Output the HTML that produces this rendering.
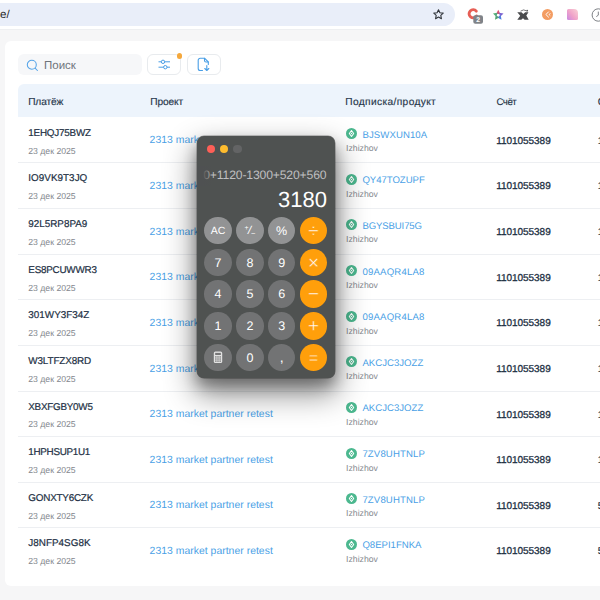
<!DOCTYPE html>
<html lang="ru"><head><meta charset="utf-8"><title>Платежи</title>
<style>
*{box-sizing:border-box;margin:0;padding:0}
html,body{width:600px;height:600px;overflow:hidden}
body{position:relative;background:#f6f6f7;font-family:"Liberation Sans",sans-serif;color:#223044;text-rendering:geometricPrecision}
.abs{position:absolute}
#chrome{left:0;top:0;width:600px;height:30px;background:#fff;border-bottom:1px solid #eeeff1}
#omni{left:-20px;top:3.2px;width:475px;height:22.5px;border-radius:12px;background:#e9eef9}
#url{left:0;top:7.6px;font-size:11.5px;color:#1f1f1f;line-height:14px}
#card{left:4.6px;top:40.6px;width:640px;height:545.6px;background:#fff;border-radius:6px}
#search{left:17.6px;top:54.3px;width:124px;height:21.2px;border-radius:6px;background:#f6f7f9}
#search span{position:absolute;left:26.4px;top:4.5px;font-size:11.5px;line-height:14px;color:#6f747b}
.btn{top:54px;width:34px;height:21px;border-radius:6px;border:1px solid #e8ebee;background:#fff}
#thead{left:17.7px;top:84.2px;width:600px;height:33.1px;background:#edf4fc;border-radius:6px 0 0 0}
.th{top:96.1px;font-size:10.2px;line-height:13px;color:#27364a;-webkit-text-stroke:.15px #27364a;white-space:nowrap}
.line{left:18px;width:600px;height:1px;background:#edeff2}
.id{left:28.3px;font-size:9.9px;line-height:12px;color:#223044;-webkit-text-stroke:.2px #223044;white-space:nowrap;letter-spacing:-.05px}
.dt{left:28.2px;font-size:8.7px;line-height:11px;color:#83878e;white-space:nowrap}
.pj{left:149.6px;font-size:10.4px;letter-spacing:.03px;line-height:13px;color:#4a9fe6;white-space:nowrap}
.sub{left:362.4px;font-size:9.6px;letter-spacing:-.12px;line-height:12px;color:#4a9fe6;white-space:nowrap}
.own{left:346.1px;font-size:8.7px;line-height:11px;color:#83878e;white-space:nowrap}
.acc{left:496.2px;letter-spacing:-.04px;font-size:10px;line-height:12px;color:#223044;-webkit-text-stroke:.3px #223044;white-space:nowrap}
.amt{left:597.8px;font-size:10px;line-height:12px;color:#223044;-webkit-text-stroke:.2px #223044;white-space:nowrap}
.gi{left:345.5px;width:11px;height:11px}
#calc{left:197.1px;top:135.6px;width:137.6px;height:242px;border-radius:7px;background:#4f5251;
 box-shadow:0 0 0 .5px rgba(0,0,0,.4),0 14px 30px 3px rgba(0,0,0,.44),0 8px 14px rgba(0,0,0,.3);overflow:hidden}
.tl{top:9.3px;width:8.1px;height:8.1px;border-radius:50%}
#expr{right:8.3px;top:31.5px;font-size:12.2px;letter-spacing:-.16px;line-height:16px;color:#bfbfc0;white-space:nowrap}
#res{right:7.8px;top:50.5px;font-size:22px;line-height:28px;color:#fff;white-space:nowrap}
.k{width:27.4px;height:27.4px;border-radius:50%;color:#fff;text-align:center;font-size:12.5px;line-height:29px}
.kf{background:#929394}.kd{background:#727374}.ko{background:#ff9f0b}
</style></head><body>
<div id="chrome" class="abs"></div>
<div id="omni" class="abs"></div>
<div id="url" class="abs">e/</div>
<svg class="abs" style="left:432px;top:8px" width="13" height="13" viewBox="0 0 24 24"><path d="M12 3.2l2.6 5.6 6.1.7-4.5 4.2 1.2 6-5.4-3-5.4 3 1.2-6L3.300 9.500l6.100-.7z" fill="none" stroke="#30343a" stroke-width="2" stroke-linejoin="round"/></svg>
<!-- extension icons -->
<svg class="abs" style="left:464px;top:5px" width="22" height="22" viewBox="0 0 22 22"><path d="M12.300 6.100A4.100 4.100 0 1 0 12.600 11" fill="none" stroke="#e65e55" stroke-width="2.900" stroke-linecap="round"/><rect x="9.300" y="10.300" width="9.700" height="8.500" rx="2" fill="#7f8388"/><text x="14.150" y="17.200" font-size="6.800" font-weight="bold" fill="#fff" text-anchor="middle" font-family="Liberation Sans,sans-serif">2</text></svg>
<svg class="abs" style="left:492px;top:8.500px" width="12.500" height="12.500" viewBox="-6 -6 12 12"><g><path d="M0-5.300L2-1.300H-2z" fill="#e2506c"/><path d="M0-5.300L2-1.300H-2z" fill="#7a5fd0" transform="rotate(72)"/><path d="M0-5.300L2-1.300H-2z" fill="#4a7de0" transform="rotate(144)"/><path d="M0-5.300L2-1.300H-2z" fill="#46a866" transform="rotate(216)"/><path d="M0-5.300L2-1.300H-2z" fill="#4fb070" transform="rotate(288)"/><path d="M0-2.500L2.400-.8 1.500 2 -1.500 2 -2.400-.8z" fill="none" stroke="#8a7fd0" stroke-width=".5" opacity=".6"/></g></svg>
<svg class="abs" style="left:517px;top:8.500px" width="12" height="12" viewBox="0 0 12 12"><path d="M.3 3.200H4.500L6.300 5 8.200 3.200H11.500L9.300 6.600 11.700 10.800H7.600L6 9.200 4.300 10.800H.3L3.200 6.800z" fill="#4a4b4d"/><path d="M3.500 2.200Q6.500-.2 9.500 1.800" fill="none" stroke="#5a5b5d" stroke-width=".8"/><circle cx="10.200" cy="1.700" r=".9" fill="#5a5b5d"/></svg>
<svg class="abs" style="left:542px;top:9.200px" width="11" height="11" viewBox="0 0 11 11"><circle cx="5.500" cy="5.500" r="5.500" fill="#f39c62"/><path d="M6.800 2.600L3.900 5.500l2.900 2.900M8.300 4.300L7.100 5.500l1.200 1.200" fill="none" stroke="#fff" stroke-width="1"/></svg>
<div class="abs" style="left:567px;top:9.200px;width:11.300px;height:10.600px;border-radius:1.500px 4px 1.500px 1.500px;background:linear-gradient(50deg,#c987e2,#f0a3c9 45%,#f9d3d6)"></div>
<svg class="abs" style="left:591px;top:7.700px" width="14" height="14" viewBox="0 0 14 14"><circle cx="7.300" cy="7" r="6.200" fill="none" stroke="#7d8085" stroke-width="1"/><path d="M7.300 3.600V7.200L5.300 8.600" fill="none" stroke="#7d8085" stroke-width="1"/></svg>

<div id="card" class="abs"></div>
<div id="search" class="abs"><svg style="position:absolute;left:8.300px;top:4.500px" width="13" height="13" viewBox="0 0 13 13"><circle cx="5.800" cy="5.800" r="4.500" fill="none" stroke="#55a4e8" stroke-width="1.050"/><path d="M9.100 9.100l2.300 2.400" stroke="#55a4e8" stroke-width="1.050" stroke-linecap="round"/></svg><span>Поиск</span></div>
<div class="abs btn" style="left:147px"><svg style="position:absolute;left:9.8px;top:3.7px" width="13" height="11" viewBox="0 0 13 11"><g stroke="#4a9fe6" stroke-width="1" fill="#fff"><path d="M.5 2.800h11.500M.5 8.200h11.500"/><circle cx="5" cy="2.800" r="1.700"/><circle cx="7.300" cy="8.200" r="1.700"/></g></svg></div>
<div class="abs" style="left:177.1px;top:53.2px;width:5.400px;height:5.400px;border-radius:50%;background:#f5a83c"></div>
<div class="abs btn" style="left:186.500px"><svg style="position:absolute;left:9.3px;top:1.8px" width="13" height="15" viewBox="0 0 13 15"><g stroke="#4a9fe6" stroke-width="1.100" fill="none" stroke-linecap="round" stroke-linejoin="round"><path d="M5.500 13.500H3.200a2 2 0 0 1-2-2V3.200a2 2 0 0 1 2-2h4.300l3.800 3.800v2.500"/><path d="M7.500 1.200v2.300a1.500 1.500 0 0 0 1.500 1.500h2.300"/><path d="M9.800 8.500v4.800M7.800 11.500l2 2 2-2"/></g></svg></div>
<div id="thead" class="abs"></div>
<div class="abs th" style="left:28.2px;letter-spacing:-.15px">Платёж</div>
<div class="abs th" style="left:150.2px;letter-spacing:-.1px">Проект</div>
<div class="abs th" style="left:345.3px;letter-spacing:.36px">Подписка/продукт</div>
<div class="abs th" style="left:496.4px;font-size:9.6px;letter-spacing:-.4px">Счёт</div>
<div class="abs th" style="left:597.8px">Сумма</div>

<div class="abs id" style="top:127.8px;letter-spacing:-0.22px">1EHQJ75BWZ</div>
<div class="abs dt" style="top:145.7px">23 дек 2025</div>
<div class="abs pj" style="top:134.4px">2313 market partner retest</div>
<svg class="abs gi" style="top:128.2px" viewBox="0 0 11 11"><circle cx="5.500" cy="5.500" r="5.500" fill="#4cb88f"/><path d="M5.500 2.500L7.700 5.500 5.500 8.500 3.300 5.500z" fill="none" stroke="#fff" stroke-width="1.050" stroke-linejoin="round"/><circle cx="5.500" cy="5.500" r=".65" fill="#fff"/></svg>
<div class="abs sub" style="top:129.7px;letter-spacing:0.09px">BJSWXUN10A</div>
<div class="abs own" style="top:143.2px">Izhizhov</div>
<div class="abs acc" style="top:135.8px">1101055389</div>
<div class="abs amt" style="top:135.8px">1 120</div>
<div class="abs line" style="top:162.4px"></div>
<div class="abs id" style="top:173.4px;letter-spacing:0.03px">IO9VK9T3JQ</div>
<div class="abs dt" style="top:191.3px">23 дек 2025</div>
<div class="abs pj" style="top:180.0px">2313 market partner retest</div>
<svg class="abs gi" style="top:173.8px" viewBox="0 0 11 11"><circle cx="5.500" cy="5.500" r="5.500" fill="#4cb88f"/><path d="M5.500 2.500L7.700 5.500 5.500 8.500 3.300 5.500z" fill="none" stroke="#fff" stroke-width="1.050" stroke-linejoin="round"/><circle cx="5.500" cy="5.500" r=".65" fill="#fff"/></svg>
<div class="abs sub" style="top:175.3px;letter-spacing:-0.04px">QY47TOZUPF</div>
<div class="abs own" style="top:188.8px">Izhizhov</div>
<div class="abs acc" style="top:181.4px">1101055389</div>
<div class="abs amt" style="top:181.4px">1 120</div>
<div class="abs line" style="top:208.0px"></div>
<div class="abs id" style="top:219.0px;letter-spacing:-0.01px">92L5RP8PA9</div>
<div class="abs dt" style="top:236.9px">23 дек 2025</div>
<div class="abs pj" style="top:225.6px">2313 market partner retest</div>
<svg class="abs gi" style="top:219.4px" viewBox="0 0 11 11"><circle cx="5.500" cy="5.500" r="5.500" fill="#4cb88f"/><path d="M5.500 2.500L7.700 5.500 5.500 8.500 3.300 5.500z" fill="none" stroke="#fff" stroke-width="1.050" stroke-linejoin="round"/><circle cx="5.500" cy="5.500" r=".65" fill="#fff"/></svg>
<div class="abs sub" style="top:220.9px;letter-spacing:-0.13px">BGYSBUI75G</div>
<div class="abs own" style="top:234.4px">Izhizhov</div>
<div class="abs acc" style="top:227.0px">1101055389</div>
<div class="abs amt" style="top:227.0px">1 120</div>
<div class="abs line" style="top:253.6px"></div>
<div class="abs id" style="top:264.7px;letter-spacing:-0.24px">ES8PCUWWR3</div>
<div class="abs dt" style="top:282.6px">23 дек 2025</div>
<div class="abs pj" style="top:271.3px">2313 market partner retest</div>
<svg class="abs gi" style="top:265.1px" viewBox="0 0 11 11"><circle cx="5.500" cy="5.500" r="5.500" fill="#4cb88f"/><path d="M5.500 2.500L7.700 5.500 5.500 8.500 3.300 5.500z" fill="none" stroke="#fff" stroke-width="1.050" stroke-linejoin="round"/><circle cx="5.500" cy="5.500" r=".65" fill="#fff"/></svg>
<div class="abs sub" style="top:266.6px;letter-spacing:0.2px">09AAQR4LA8</div>
<div class="abs own" style="top:280.1px">Izhizhov</div>
<div class="abs acc" style="top:272.7px">1101055389</div>
<div class="abs amt" style="top:272.7px">1 120</div>
<div class="abs line" style="top:299.2px"></div>
<div class="abs id" style="top:310.3px;letter-spacing:0.01px">301WY3F34Z</div>
<div class="abs dt" style="top:328.2px">23 дек 2025</div>
<div class="abs pj" style="top:316.9px">2313 market partner retest</div>
<svg class="abs gi" style="top:310.7px" viewBox="0 0 11 11"><circle cx="5.500" cy="5.500" r="5.500" fill="#4cb88f"/><path d="M5.500 2.500L7.700 5.500 5.500 8.500 3.300 5.500z" fill="none" stroke="#fff" stroke-width="1.050" stroke-linejoin="round"/><circle cx="5.500" cy="5.500" r=".65" fill="#fff"/></svg>
<div class="abs sub" style="top:312.2px;letter-spacing:0.2px">09AAQR4LA8</div>
<div class="abs own" style="top:325.7px">Izhizhov</div>
<div class="abs acc" style="top:318.3px">1101055389</div>
<div class="abs amt" style="top:318.3px">1 120</div>
<div class="abs line" style="top:344.9px"></div>
<div class="abs id" style="top:355.9px;letter-spacing:-0.13px">W3LTFZX8RD</div>
<div class="abs dt" style="top:373.8px">23 дек 2025</div>
<div class="abs pj" style="top:362.5px">2313 market partner retest</div>
<svg class="abs gi" style="top:356.3px" viewBox="0 0 11 11"><circle cx="5.500" cy="5.500" r="5.500" fill="#4cb88f"/><path d="M5.500 2.500L7.700 5.500 5.500 8.500 3.300 5.500z" fill="none" stroke="#fff" stroke-width="1.050" stroke-linejoin="round"/><circle cx="5.500" cy="5.500" r=".65" fill="#fff"/></svg>
<div class="abs sub" style="top:357.8px;letter-spacing:0.01px">AKCJC3JOZZ</div>
<div class="abs own" style="top:371.3px">Izhizhov</div>
<div class="abs acc" style="top:363.9px">1101055389</div>
<div class="abs amt" style="top:363.9px">1 120</div>
<div class="abs line" style="top:390.5px"></div>
<div class="abs id" style="top:401.5px;letter-spacing:-0.26px">XBXFGBY0W5</div>
<div class="abs dt" style="top:419.4px">23 дек 2025</div>
<div class="abs pj" style="top:408.1px">2313 market partner retest</div>
<svg class="abs gi" style="top:401.9px" viewBox="0 0 11 11"><circle cx="5.500" cy="5.500" r="5.500" fill="#4cb88f"/><path d="M5.500 2.500L7.700 5.500 5.500 8.500 3.300 5.500z" fill="none" stroke="#fff" stroke-width="1.050" stroke-linejoin="round"/><circle cx="5.500" cy="5.500" r=".65" fill="#fff"/></svg>
<div class="abs sub" style="top:403.4px;letter-spacing:0.02px">AKCJC3JOZZ</div>
<div class="abs own" style="top:416.9px">Izhizhov</div>
<div class="abs acc" style="top:409.5px">1101055389</div>
<div class="abs amt" style="top:409.5px">1 120</div>
<div class="abs line" style="top:436.1px"></div>
<div class="abs id" style="top:447.1px;letter-spacing:-0.31px">1HPHSUP1U1</div>
<div class="abs dt" style="top:465.0px">23 дек 2025</div>
<div class="abs pj" style="top:453.7px">2313 market partner retest</div>
<svg class="abs gi" style="top:447.5px" viewBox="0 0 11 11"><circle cx="5.500" cy="5.500" r="5.500" fill="#4cb88f"/><path d="M5.500 2.500L7.700 5.500 5.500 8.500 3.300 5.500z" fill="none" stroke="#fff" stroke-width="1.050" stroke-linejoin="round"/><circle cx="5.500" cy="5.500" r=".65" fill="#fff"/></svg>
<div class="abs sub" style="top:449.0px;letter-spacing:0.13px">7ZV8UHTNLP</div>
<div class="abs own" style="top:462.5px">Izhizhov</div>
<div class="abs acc" style="top:455.1px">1101055389</div>
<div class="abs amt" style="top:455.1px">1 120</div>
<div class="abs line" style="top:481.7px"></div>
<div class="abs id" style="top:492.8px;letter-spacing:-0.22px">GONXTY6CZK</div>
<div class="abs dt" style="top:510.7px">23 дек 2025</div>
<div class="abs pj" style="top:499.4px">2313 market partner retest</div>
<svg class="abs gi" style="top:493.2px" viewBox="0 0 11 11"><circle cx="5.500" cy="5.500" r="5.500" fill="#4cb88f"/><path d="M5.500 2.500L7.700 5.500 5.500 8.500 3.300 5.500z" fill="none" stroke="#fff" stroke-width="1.050" stroke-linejoin="round"/><circle cx="5.500" cy="5.500" r=".65" fill="#fff"/></svg>
<div class="abs sub" style="top:494.7px;letter-spacing:0.13px">7ZV8UHTNLP</div>
<div class="abs own" style="top:508.2px">Izhizhov</div>
<div class="abs acc" style="top:500.8px">1101055389</div>
<div class="abs amt" style="top:500.8px">5 120</div>
<div class="abs line" style="top:527.3px"></div>
<div class="abs id" style="top:538.4px;letter-spacing:0.02px">J8NFP4SG8K</div>
<div class="abs dt" style="top:556.3px">23 дек 2025</div>
<div class="abs pj" style="top:545.0px">2313 market partner retest</div>
<svg class="abs gi" style="top:538.8px" viewBox="0 0 11 11"><circle cx="5.500" cy="5.500" r="5.500" fill="#4cb88f"/><path d="M5.500 2.500L7.700 5.500 5.500 8.500 3.300 5.500z" fill="none" stroke="#fff" stroke-width="1.050" stroke-linejoin="round"/><circle cx="5.500" cy="5.500" r=".65" fill="#fff"/></svg>
<div class="abs sub" style="top:540.3px;letter-spacing:-0.01px">Q8EPI1FNKA</div>
<div class="abs own" style="top:553.8px">Izhizhov</div>
<div class="abs acc" style="top:546.4px">1101055389</div>
<div class="abs amt" style="top:546.4px">5 120</div>
<div id="calc" class="abs">
<div class="abs tl" style="left:9.6px;background:#fe5f57"></div>
<div class="abs tl" style="left:23.1px;background:#febc2e"></div>
<div class="abs tl" style="left:36.4px;background:#636465"></div>
<div id="expr" class="abs">0+1120-1300+520+560</div>
<div class="abs" style="left:0;top:30px;width:16px;height:20px;background:linear-gradient(90deg,#4f5152 35%,rgba(79,81,82,0))"></div>
<div id="res" class="abs">3180</div>
<div class="abs k kf" style="left:7.3px;top:81.2px;font-size:10.500px;">AC</div>
<div class="abs k kf" style="left:39.1px;top:81.2px;font-size:11px;"><span style="position:relative;top:1.3px;display:inline-block;width:10px;height:10px;vertical-align:middle;line-height:10px"><span style="position:absolute;left:-.5px;top:-3.2px;font-size:7px">+</span><span style="position:absolute;left:3px;top:-.8px;font-size:11.5px;transform:skewX(-12deg)">/</span><span style="position:absolute;left:6px;top:1.8px;font-size:7.5px">−</span></span></div>
<div class="abs k kf" style="left:70.9px;top:81.2px;">%</div>
<div class="abs k ko" style="left:102.7px;top:81.2px;font-size:19px;-webkit-text-stroke:.45px #ff9f0b;line-height:30.2px;">÷</div>
<div class="abs k kd" style="left:7.3px;top:113.0px;">7</div>
<div class="abs k kd" style="left:39.1px;top:113.0px;">8</div>
<div class="abs k kd" style="left:70.9px;top:113.0px;">9</div>
<div class="abs k ko" style="left:102.7px;top:113.0px;font-size:19px;-webkit-text-stroke:.45px #ff9f0b;line-height:30.2px;">×</div>
<div class="abs k kd" style="left:7.3px;top:144.8px;">4</div>
<div class="abs k kd" style="left:39.1px;top:144.8px;">5</div>
<div class="abs k kd" style="left:70.9px;top:144.8px;">6</div>
<div class="abs k ko" style="left:102.7px;top:144.8px;font-size:19px;-webkit-text-stroke:.45px #ff9f0b;line-height:30.2px;">−</div>
<div class="abs k kd" style="left:7.3px;top:176.6px;">1</div>
<div class="abs k kd" style="left:39.1px;top:176.6px;">2</div>
<div class="abs k kd" style="left:70.9px;top:176.6px;">3</div>
<div class="abs k ko" style="left:102.7px;top:176.6px;font-size:19px;-webkit-text-stroke:.45px #ff9f0b;line-height:30.2px;">+</div>
<div class="abs k kd" style="left:7.3px;top:208.4px;"><svg width="10" height="12.6" viewBox="0 0 9 12" style="vertical-align:middle;margin-top:-3px"><rect x=".5" y=".5" width="8" height="11" rx="1.500" fill="#e2e2e2"/><rect x="1.800" y="1.800" width="5.400" height="2" fill="#757576"/><g fill="#757576"><rect x="1.800" y="5" width="1.300" height="1.300"/><rect x="3.850" y="5" width="1.300" height="1.300"/><rect x="5.900" y="5" width="1.300" height="1.300"/><rect x="1.800" y="7" width="1.300" height="1.300"/><rect x="3.850" y="7" width="1.300" height="1.300"/><rect x="5.900" y="7" width="1.300" height="1.300"/><rect x="1.800" y="9" width="1.300" height="1.300"/><rect x="3.850" y="9" width="1.300" height="1.300"/><rect x="5.900" y="9" width="1.300" height="1.300"/></g></svg></div>
<div class="abs k kd" style="left:39.1px;top:208.4px;">0</div>
<div class="abs k kd" style="left:70.9px;top:208.4px;font-size:14px;line-height:27.5px;">,</div>
<div class="abs k ko" style="left:102.7px;top:208.4px;font-size:15.5px;-webkit-text-stroke:.35px #ff9f0b;line-height:29.5px;">=</div>
</div>
</body></html>
